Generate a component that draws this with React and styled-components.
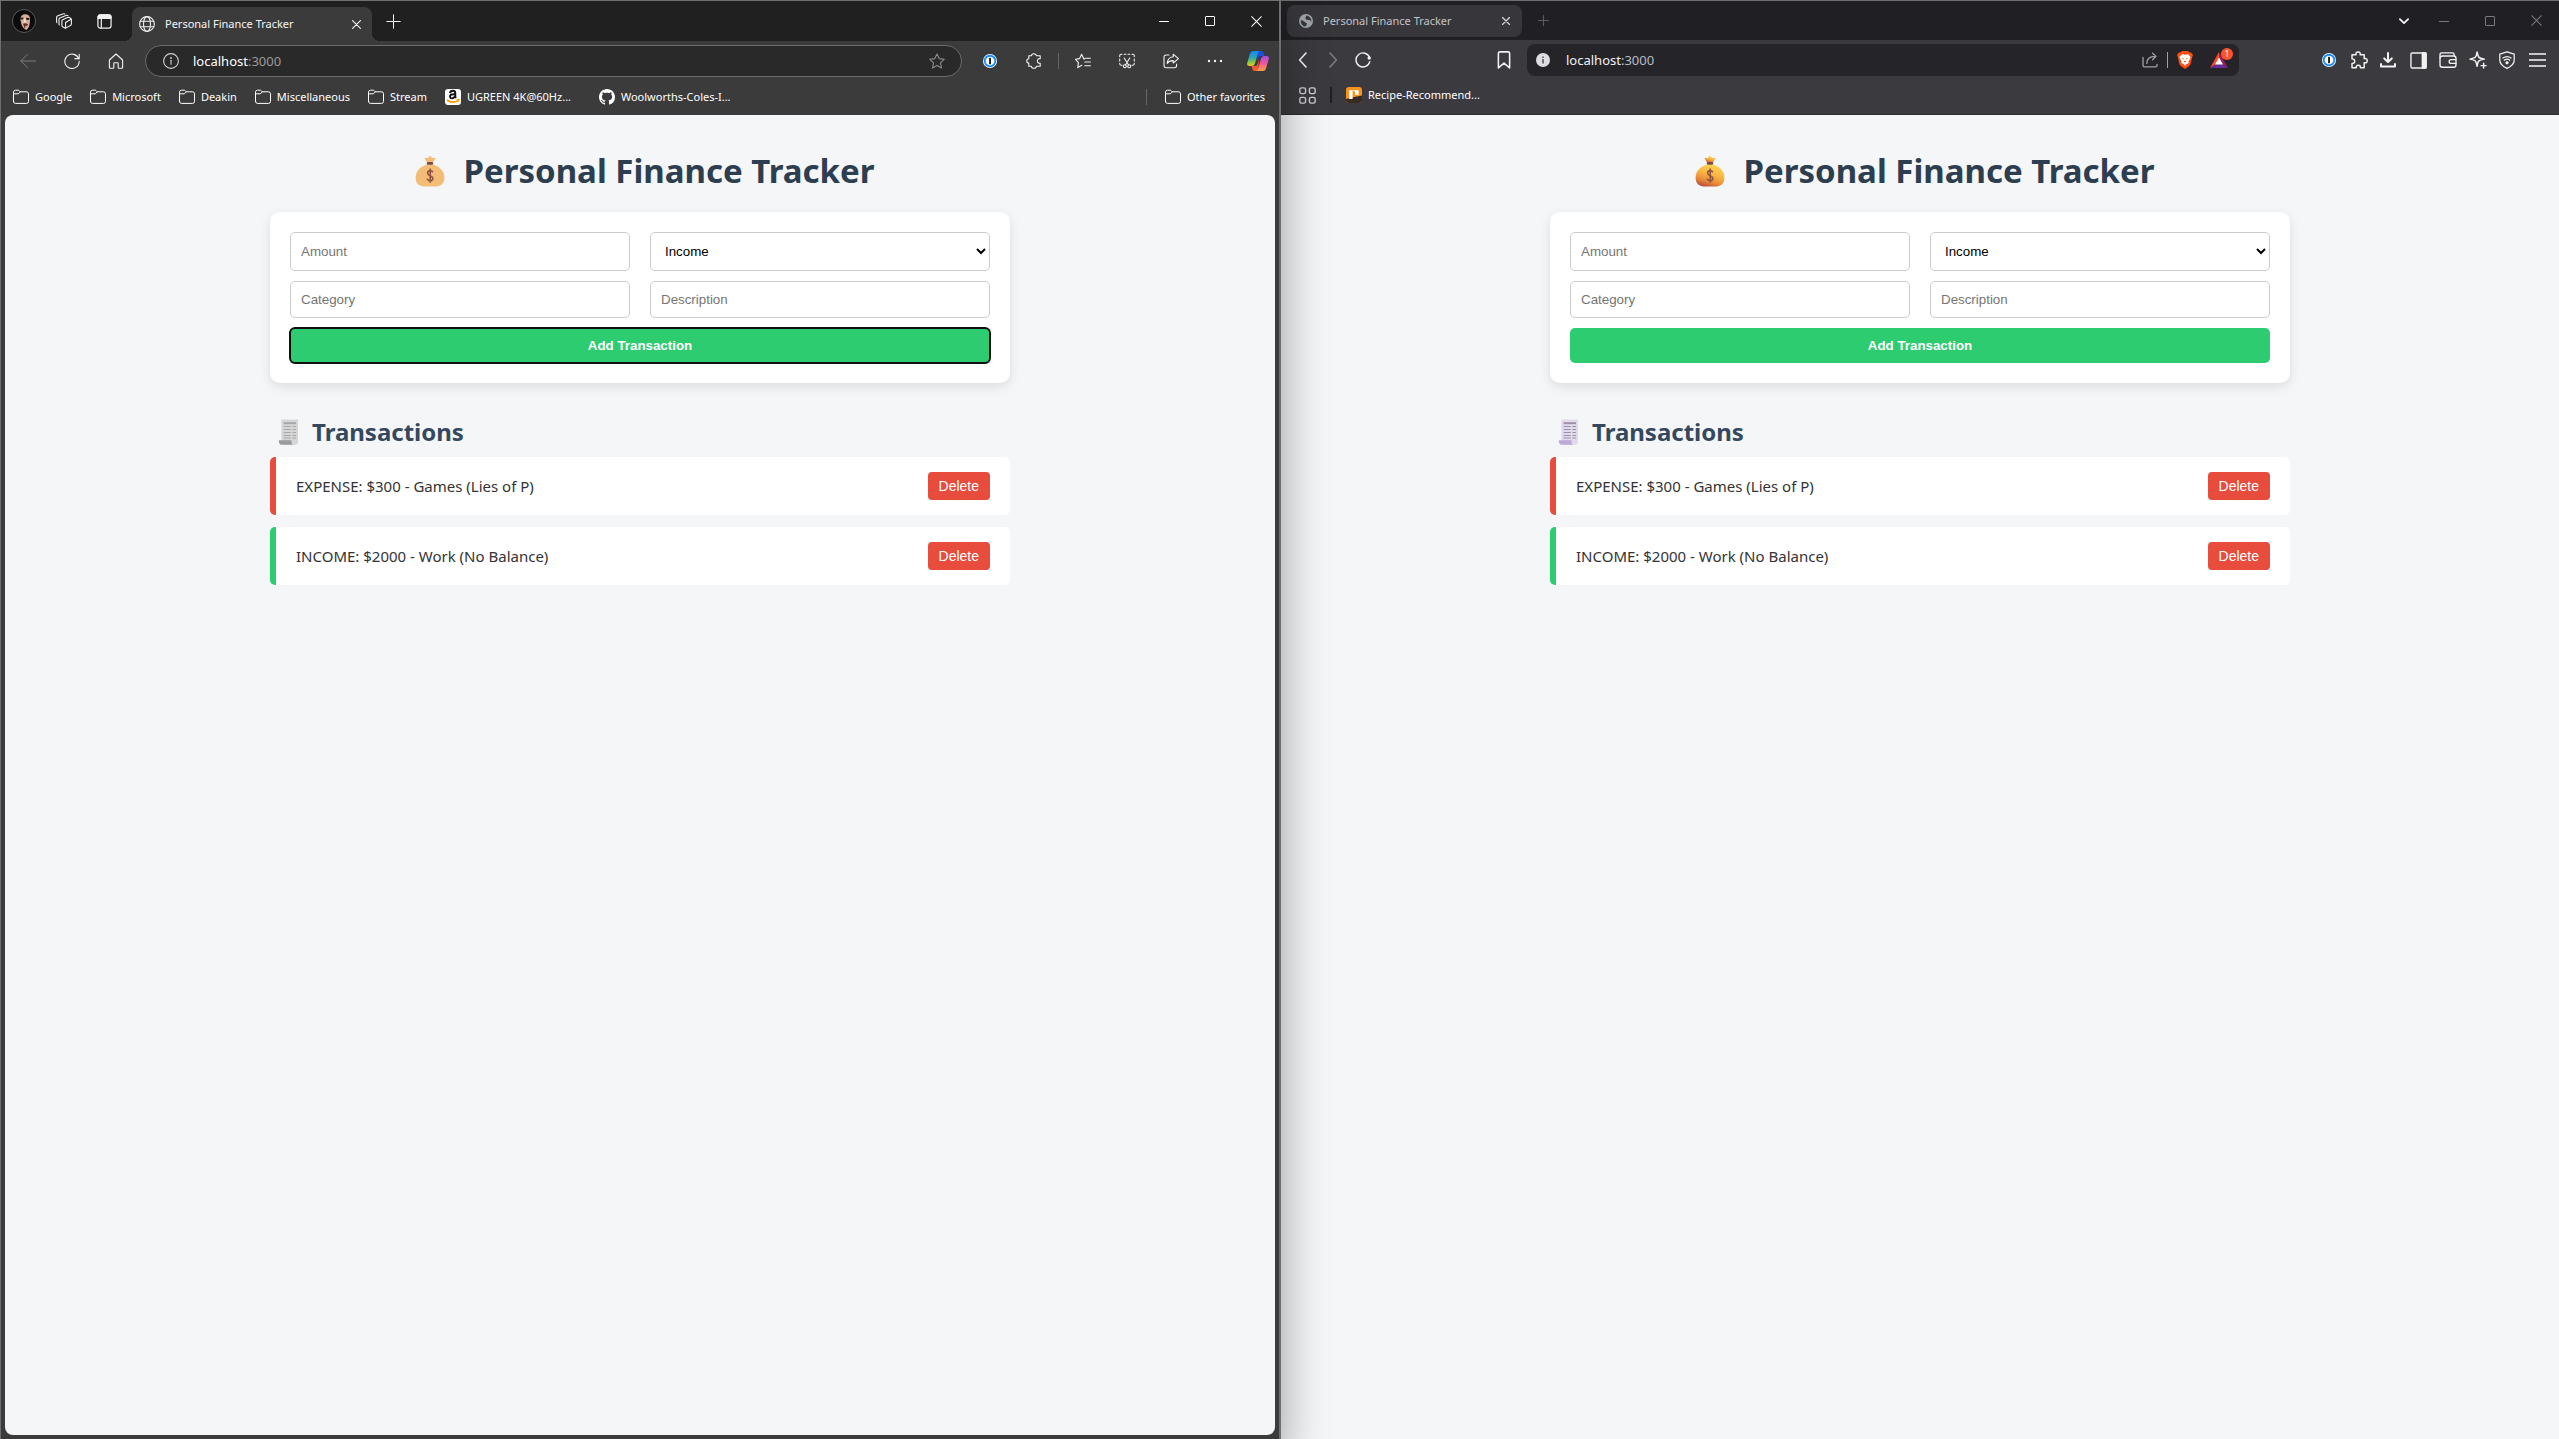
import React from "react";
import styled, { createGlobalStyle, css } from "styled-components";

const UI_FONT = `"Noto Sans", "Open Sans", sans-serif`;
const CONTROL_FONT = `"Liberation Sans", Arial, sans-serif`;

const GlobalStyle = createGlobalStyle`
  *, *::before, *::after { box-sizing: border-box; }
  body { margin: 0; background: #f4f6f8; font-family: ${UI_FONT}; }
  button { font-family: inherit; }
`;

/* ---------- desktop ---------- */

const Desktop = styled.div`
  display: grid;
  grid-template-columns: minmax(0, 1281fr) minmax(0, 1278fr);
  min-height: 100vh;
  overflow: hidden;
`;

const EdgeWindow = styled.section`
  position: relative;
  z-index: 1;
  display: flex;
  flex-direction: column;
  background: #3b3b3b;
  border: solid #6f6f6f;
  border-width: 1px 2px 0 1px;
  box-shadow: 0 24px 44px rgba(0, 0, 0, 0.38);
`;

const BraveWindow = styled.section`
  display: flex;
  flex-direction: column;
  background: #3b3b3f;
  border-top: 1px solid #6f6f6f;
`;

/* ---------- shared chrome parts ---------- */

const IconButton = styled.button`
  display: flex;
  align-items: center;
  justify-content: center;
  flex: ${(p) => (p.$grow ? "1 1 0" : "none")};
  width: ${(p) => p.$w || 44}px;
  min-width: 0;
  height: 32px;
  padding: 0;
  border: 0;
  background: none;
  color: ${(p) => p.$color || "#f2f2f2"};
`;

const Divider = styled.span`
  flex: none;
  width: ${(p) => p.$w || 1}px;
  height: 16px;
  margin: 0 ${(p) => p.$gap}px;
  background: ${(p) => p.$color};
`;

const TabTitle = styled.span`
  flex: 1;
  font-size: 11px;
  line-height: 16px;
  white-space: nowrap;
  color: ${(p) => p.$color};
`;

const Spacer = styled.span`
  flex: 1;
`;

const AddressBox = styled.div`
  display: flex;
  align-items: center;
  flex: 1;
  min-width: 0;
  height: 32px;
`;

const Url = styled.a`
  flex: 1;
  font-size: 13px;
  line-height: 20px;
  color: ${(p) => p.$color};
  text-decoration: none;
`;

const Port = styled.span`
  color: ${(p) => p.$color};
`;

const Bookmark = styled.a`
  display: flex;
  align-items: center;
  gap: 6px;
  flex: none;
  min-width: ${(p) => p.$min || 0}px;
  color: #fff;
  font-size: 11px;
  line-height: 16px;
  white-space: nowrap;
  text-decoration: none;
`;

/* ---------- Edge ---------- */

const EdgeTitleBar = styled.header`
  display: flex;
  align-items: center;
  height: 40px;
  padding-left: 3px;
  background: #202020;
`;

const EdgeTab = styled.div`
  position: relative;
  display: flex;
  align-items: center;
  align-self: flex-end;
  gap: 10px;
  width: 240px;
  height: 34px;
  margin: 0 7px 0 8px;
  padding-left: 7px;
  border-radius: 8px 8px 0 0;
  background: #3b3b3b;
  color: #f0f0f0;
  &::before,
  &::after {
    content: "";
    position: absolute;
    bottom: 0;
    width: 8px;
    height: 8px;
  }
  &::before {
    right: 100%;
    background: radial-gradient(circle at 0 0, #202020 8px, #3b3b3b 8px);
  }
  &::after {
    left: 100%;
    background: radial-gradient(circle at 100% 0, #202020 8px, #3b3b3b 8px);
  }
`;

const EdgeToolbar = styled.nav`
  display: flex;
  align-items: center;
  height: 40px;
  padding-left: 5px;
`;

const EdgeAddress = styled(AddressBox)`
  gap: 14px;
  margin: 0 6px 0 7px;
  padding: 0 16px;
  border: 1px solid #6b6b6b;
  border-radius: 16px;
  background: #292929;
`;

const EdgeBookmarks = styled.nav`
  display: flex;
  align-items: center;
  gap: 18px;
  height: 34px;
  padding: 0 14px 2px 12px;
`;

const EdgeViewport = styled.main`
  flex: 1;
  margin: 0 4px 4px;
  border-radius: 8px;
  background: #f4f6f8;
`;

/* ---------- Brave ---------- */

const BraveTitleBar = styled.header`
  display: flex;
  align-items: center;
  height: 39px;
  padding-left: 6px;
  background: #202024;
`;

const BraveTab = styled.div`
  display: flex;
  align-items: center;
  gap: 10px;
  width: 235px;
  height: 32px;
  padding-left: 12px;
  border-radius: 8px;
  background: #36363b;
`;

const BraveToolbar = styled.nav`
  display: flex;
  align-items: center;
  height: 40px;
  padding: 0 7px;
`;

const BraveAddress = styled(AddressBox)`
  gap: 16px;
  margin: 0 75px 0 7px;
  padding: 0 2px 0 9px;
  border-radius: 8px;
  background: #252529;
`;

const AddressActions = styled.div`
  display: flex;
  align-items: center;
`;

const BookmarkToggle = styled(IconButton)`
  margin-left: 110px;
`;

const BraveActions = styled.div`
  display: flex;
  width: 238px;
`;

const BraveBookmarks = styled.nav`
  display: flex;
  align-items: center;
  height: 35px;
  padding: 0 18px 4px;
  border-bottom: 1px solid #2c2c2f;
`;

const BraveViewport = styled.main`
  flex: 1;
  background: #f4f6f8;
`;

const RewardsButton = styled(IconButton)`
  position: relative;
`;

const Badge = styled.span`
  position: absolute;
  top: 4px;
  right: 4px;
  width: 12px;
  height: 12px;
  border-radius: 6px;
  background: #fb542b;
  color: #fff;
  font-size: 8px;
  line-height: 12px;
  text-align: center;
`;

/* ---------- finance page ---------- */

const Page = styled.div`
  width: 740px;
  max-width: 100%;
  margin: 0 auto;
  padding: 32px 0;
`;

const Title = styled.h1`
  display: flex;
  align-items: center;
  justify-content: center;
  gap: 10px;
  margin: 0 0 17px;
  color: #2c3e50;
  font-size: 33px;
  line-height: 48px;
  font-weight: 700;
`;

const Form = styled.form`
  display: grid;
  grid-template-columns: 1fr 1fr;
  gap: 10px 20px;
  padding: 20px;
  border-radius: 10px;
  background: #fff;
  box-shadow: 0 4px 12px rgba(0, 0, 0, 0.1);
`;

const field = css`
  width: 100%;
  padding: 10px;
  border: 1px solid #ccc;
  border-radius: 5px;
  background: #fff;
  font-family: ${CONTROL_FONT};
`;

const Input = styled.input`
  ${field}
  &::placeholder { color: #757575; }
`;

const Select = styled.select`
  ${field}
  height: 39px;
  color: #000;
`;

const SubmitButton = styled.button`
  grid-column: 1 / -1;
  padding: 10px;
  border: 0;
  border-radius: 5px;
  background: #2ecc71;
  color: #fff;
  font-family: ${CONTROL_FONT};
  font-weight: 700;
  outline: ${(p) => (p.$focused ? "2px solid #101010" : "none")};
  outline-offset: -1px;
`;

const SectionTitle = styled.h2`
  display: flex;
  align-items: center;
  gap: 6px;
  margin: 31px 0 7px;
  color: #34495e;
  font-size: 24px;
  line-height: 36px;
  font-weight: 700;
`;

const List = styled.ul`
  display: flex;
  flex-direction: column;
  gap: 12px;
  margin: 0;
  padding: 0;
  list-style: none;
`;

const Item = styled.li`
  display: flex;
  align-items: center;
  justify-content: space-between;
  padding: 15px 20px;
  border-left: 6px solid ${(p) => (p.$type === "INCOME" ? "#2ecc71" : "#e74c3c")};
  border-radius: 5px;
  background: #fff;
  color: #333;
  font-size: 15px;
  line-height: 28px;
`;

const DeleteButton = styled.button`
  height: 28px;
  padding: 0 11px;
  border: 0;
  border-radius: 4px;
  background: #e74c3c;
  color: #fff;
  font-family: ${CONTROL_FONT};
  font-size: 14px;
`;

/* ---------- drawings ---------- */

const Glyph = ({ size = 16, sw = 1, children }) => (
  <svg width={size} height={size} viewBox="0 0 16 16" fill="none" stroke="currentColor"
    strokeWidth={sw} strokeLinecap="round" strokeLinejoin="round" aria-hidden="true">
    {children}
  </svg>
);

const Folder = () => (
  <Glyph sw={1}>
    <path d="M.5 12.4V3.2Q.5 1.2 2.5 1.2H5Q5.8 1.2 6.3 1.8L7.3 2.8H13.5Q15.5 2.8 15.5 4.8V12.4Q15.5 14.4 13.5 14.4H2.5Q.5 14.4.5 12.4Z" />
    <path d="M.8 4.8H5Q5.8 4.8 6.3 4L7.3 2.8" />
  </Glyph>
);
const Globe = () => (
  <Glyph sw={1.1}><circle cx="8" cy="8" r="7.4" /><ellipse cx="8" cy="8" rx="3.5" ry="7.4" /><path d="M1.3 5.3H14.7M1.3 10.7H14.7" /></Glyph>
);
const Workspaces = () => (
  <Glyph size={16} sw={1.1}>
    <path d="M6.6 6.8 11.6 4.5Q12.6 4.1 13.4 4.6L14.8 5.4Q15.4 5.8 15.4 6.6V11Q15.4 11.8 14.7 12.2L10.2 14.9Q9.6 15.3 8.9 14.9L6.6 13.7Q5.9 13.3 5.9 12.5V8Q5.9 7.2 6.6 6.8Z" />
    <path d="M9.6 9.4V14.9M9.6 9.4 15 6.3" />
    <path d="M3.3 12Q3 11.7 3 11V6.4Q3 5.4 3.8 5L10 2.4Q11 2.1 12 2.7" />
    <path d="M.9 9.6Q.6 9.3.6 8.6V4.4Q.6 3.5 1.4 3.1L6.8.9Q7.8.5 8.8 1" />
  </Glyph>
);
const TabActions = () => (
  <Glyph size={15} sw={1.3}>
    <rect x="1" y="1" width="14" height="14" rx="2.4" />
    <path d="M1.2 2.6Q1.6 1 3.4 1H12.6Q14.4 1 14.8 2.6V4.6H1.2Z" fill="currentColor" />
    <path d="M4.6 5V14.8" />
  </Glyph>
);
const Cross = ({ size = 10, sw = 1.6 }) => (
  <Glyph size={size} sw={sw}><path d="M1 1 15 15M15 1 1 15" /></Glyph>
);
const Plus = ({ size = 15, sw = 1.1 }) => (
  <Glyph size={size} sw={sw}><path d="M8 .8V15.2M.8 8H15.2" /></Glyph>
);
const Minimise = () => (
  <svg width="10" height="10" viewBox="0 0 10 10" aria-hidden="true"><path d="M0 5H10V6H0Z" fill="currentColor" /></svg>
);
const Maximise = () => (
  <svg width="10" height="10" viewBox="0 0 10 10" aria-hidden="true"><rect x=".5" y=".5" width="9" height="9" rx=".5" fill="none" stroke="currentColor" /></svg>
);
const BackArrow = () => (
  <Glyph size={16}><path d="M15.5 8H.8M7.6 1.2.8 8 7.6 14.8" /></Glyph>
);
const Reload = () => (
  <Glyph size={16} sw={1.1}><path d="M14.9 6.2A7.2 7.2 0 1 0 15.2 8.4M15.2 1.2V5.6H10.8" /></Glyph>
);
const Home = () => (
  <Glyph size={16} sw={1.1}><path d="M1.4 7 8 1 14.6 7V14.4Q14.6 15.2 13.8 15.2H11Q10.2 15.2 10.2 14.4V10.6Q10.2 9.8 9.4 9.8H6.6Q5.8 9.8 5.8 10.6V14.4Q5.8 15.2 5 15.2H2.2Q1.4 15.2 1.4 14.4Z" /></Glyph>
);
const InfoOutline = () => (
  <Glyph sw={1.1}><circle cx="8" cy="8" r="7.4" /><path d="M8 7.3V11.3" /><circle cx="8" cy="4.9" r=".4" fill="currentColor" /></Glyph>
);
const STAR = "M8 .9 10.2 5.6 15.3 6.2 11.5 9.8 12.5 15 8 12.4 3.5 15 4.5 9.8.7 6.2 5.8 5.6Z";
const Star = () => <Glyph sw={1.1}><path d={STAR} /></Glyph>;
const OnePassword = () => (
  <svg width="14" height="14" viewBox="0 0 16 16" aria-hidden="true">
    <circle cx="8" cy="8" r="8" fill="#fff" /><circle cx="8" cy="8" r="7.1" fill="#1a8cff" />
    <circle cx="8" cy="8" r="5" fill="#fff" /><rect x="7" y="4.4" width="2.1" height="7.2" rx=".6" fill="#111" />
  </svg>
);
const EdgePuzzle = () => (
  <Glyph sw={1.1}><path d="M5.4 2.8Q5.6.7 7.9.7T10.4 2.8H14.2V5.6Q11.4 5.4 11.4 7.9T14.2 10.2V13.2H10.4Q10.2 15.3 7.9 15.3T5.4 13.2H2.8V10Q.8 10 .8 7.9T2.8 5.8V2.8Z" /></Glyph>
);
const Favorites = () => (
  <Glyph sw={1.1}><path d="M9.4 6H8.8L6.6 1.3 4.6 5.6.6 6.3 3.4 9.6 2.8 14.6 6.8 12.3M9.8 5.2H15.4M9.8 9H15.4M9.8 12.8H15.4" /></Glyph>
);
const Capture = () => (
  <Glyph size={16} sw={1.1}>
    <path d="M.7 3.6V2.8Q.7 1.2 2.3 1.2H3M5.2 1.2H7M9 1.2H10.8M13 1.2H13.7Q15.3 1.2 15.3 2.8V3.6M.7 6V8M15.3 6V8M.7 10.4Q.7 12.2 2.4 12.2H3M15.3 10.4Q15.3 12.2 13.6 12.2H13M5.2 5 9.6 12M10.8 5 6.4 12" />
    <circle cx="5.8" cy="13.3" r="1.5" /><circle cx="10.2" cy="13.3" r="1.5" />
  </Glyph>
);
const EdgeShare = () => (
  <Glyph sw={1.1}><path d="M6 2H3.2Q1 2 1 4.2V12.6Q1 14.8 3.2 14.8H11.4Q13.6 14.8 13.6 12.6V11M10.2 1.2 15.4 5.6 10.2 10V7.6Q6 7.4 4.2 10.6 4.6 4.4 10.2 3.8Z" /></Glyph>
);
const Dots = () => (
  <Glyph><g fill="currentColor" stroke="none"><circle cx="2" cy="8" r="1.2" /><circle cx="8" cy="8" r="1.2" /><circle cx="14" cy="8" r="1.2" /></g></Glyph>
);
const Copilot = () => (
  <svg width="22" height="20" viewBox="0 0 22 20" aria-hidden="true">
    <defs>
      <linearGradient id="cpBlue" x1="0" y1="0" x2="0" y2="1"><stop offset="0" stopColor="#1687ef" /><stop offset=".45" stopColor="#2aa6b8" /><stop offset=".75" stopColor="#8fc63f" /><stop offset="1" stopColor="#f3c51c" /></linearGradient>
      <linearGradient id="cpPink" x1="0" y1="0" x2="0" y2="1"><stop offset="0" stopColor="#a64de8" /><stop offset=".5" stopColor="#f0569a" /><stop offset="1" stopColor="#ffa13d" /></linearGradient>
    </defs>
    <path d="M11 0H14.4Q16 0 16.6 1.8L17.6 5H13.6Q12 5 11.4 7L10 12Z" fill="#1d4fd6" />
    <path d="M11.2 20H7.4Q5.8 20 5.4 18.2L4.6 15H8.6Q10 15 10.6 13L12 8Z" fill="#f45a2c" />
    <path d="M6 0H13Q11.4.4 10.8 2.6L8 12.4Q7.2 15 4.8 15H2.4Q-.6 15 .3 11.8L3 2.6Q3.8 0 6 0Z" fill="url(#cpBlue)" />
    <path d="M16 20H9Q10.6 19.6 11.2 17.4L14 7.6Q14.8 5 17.2 5H19.6Q22.6 5 21.7 8.2L19 17.4Q18.2 20 16 20Z" fill="url(#cpPink)" />
  </svg>
);
const Avatar = () => (
  <svg width="24" height="24" viewBox="0 0 24 24" aria-hidden="true">
    <circle cx="12" cy="12" r="11.5" fill="#0b0b0d" stroke="#5a5a5a" />
    <path d="M8.4 7Q9 4.2 13.4 4.4 18.6 5 18 11 18 17.6 14.6 21 11 20 9.4 15 8 11 8.4 7Z" fill="#d8ad98" />
    <path d="M8 9.6Q9.4 8 11.6 8.8L11 10.4Q9.4 10.8 8.2 10.2ZM14 9Q16.2 8.4 17.8 9.8L16.8 11H14.4Z" fill="#2a1a18" />
    <path d="M11 14.8Q13.4 13.6 15.8 15.2L15.4 17 13.6 16.4 13 20Z" fill="#5a2e2a" />
    <path d="M12 9.6 13.6 9.8 14 13.4 11.6 13.4Z" fill="#f6dccb" />
    <path d="M7.4 8.4Q8 2.8 14 3 18.6 3.4 18.4 8.6 16.6 5 13 5.2 9.6 5.2 8.2 9.6Z" fill="#120d0d" />
  </svg>
);
const Amazon = () => (
  <svg width="16" height="16" viewBox="0 0 16 16" aria-hidden="true">
    <rect width="16" height="16" rx="3" fill="#fff" />
    <path d="M5 4.2Q5.4 1.8 7.8 1.8T10.3 4.2V7.8L11 8.9M9.9 5.2Q5 5 5 7.6 5.2 9.4 6.8 9.4 8.8 9.3 9.9 7.4" fill="none" stroke="#111" strokeWidth="1.9" />
    <path d="M2 11Q7.4 15 13 11.6" fill="none" stroke="#f90" strokeWidth="1.6" />
    <path d="M11.4 10.6 14.4 10.4 13.4 13.2" fill="none" stroke="#f90" />
  </svg>
);
const GitHub = () => (
  <svg width="16" height="16" viewBox="0 0 16 16" fill="#fff" aria-hidden="true">
    <path d="M8 0C3.58 0 0 3.58 0 8c0 3.54 2.29 6.53 5.47 7.59.4.07.55-.17.55-.38 0-.19-.01-.82-.01-1.49-2.01.37-2.53-.49-2.69-.94-.09-.23-.48-.94-.82-1.13-.28-.15-.68-.52-.01-.53.63-.01 1.08.58 1.23.82.72 1.21 1.87.87 2.33.66.07-.52.28-.87.51-1.07-1.78-.2-3.64-.89-3.64-3.95 0-.87.31-1.59.82-2.15-.08-.2-.36-1.02.08-2.12 0 0 .67-.21 2.2.82.64-.18 1.32-.27 2-.27s1.36.09 2 .27c1.53-1.04 2.2-.82 2.2-.82.44 1.1.16 1.92.08 2.12.51.56.82 1.27.82 2.15 0 3.07-1.87 3.75-3.65 3.95.29.25.54.73.54 1.48 0 1.07-.01 1.93-.01 2.2 0 .21.15.46.55.38A8.01 8.01 0 0 0 16 8c0-4.42-3.58-8-8-8Z" />
  </svg>
);

const BraveGlobe = () => (
  <svg width="14" height="14" viewBox="0 0 14 14" aria-hidden="true">
    <circle cx="7" cy="7" r="7" fill="#9da1a8" />
    <path d="M1.6 6.4Q3.6 6.2 5 7.4T8 9.4Q8 11 6.4 12.4 2 12 1.6 6.4ZM8 1.6Q6 3 6.4 4.6T9.6 6Q11.6 5.6 12.4 8 12.6 3.4 8 1.6Z" fill="#36363b" />
  </svg>
);
const Chevron = ({ d, size = 16, sw = 1.6 }) => <Glyph size={size} sw={sw}><path d={d} /></Glyph>;
const BraveReload = () => (
  <Glyph size={16} sw={1.4}><path d="M14.6 5.6A7 7 0 1 0 14.8 9.6" /><circle cx="14.2" cy="6" r="1.7" fill="currentColor" stroke="none" /></Glyph>
);
const Ribbon = () => (
  <Glyph size={18} sw={1.4}><path d="M3 2.2Q3 .8 4.4.8H11.6Q13 .8 13 2.2V15L8 10.8 3 15Z" /></Glyph>
);
const InfoSolid = () => (
  <svg width="14" height="14" viewBox="0 0 14 14" aria-hidden="true"><circle cx="7" cy="7" r="7" fill="#dedee2" /><path d="M6.2 6H7.8V10.6H6.2ZM6.2 3.4H7.8V5H6.2Z" fill="#55555c" /></svg>
);
const BraveShare = () => (
  <Glyph sw={1.3}><path d="M1 5.4V13.4Q1 14.8 2.4 14.8H13.6Q15 14.8 15 13.4V12.4M4.8 11.4Q4.8 4.6 13 4.4M10.6 1.2 14 4.4 10.6 7.8" /></Glyph>
);
const BraveLion = () => (
  <svg width="16" height="18" viewBox="0 0 16 18" aria-hidden="true">
    <path d="M5 0H11L12.6 1.6 14.2 1.4 16 4 15.2 6 13.6 13Q13 15 8 18 3 15 2.4 13L.8 6 0 4 1.8 1.4 3.4 1.6Z" fill="#fb4f14" />
    <path d="M5 3.2 8 3.8 11 3.2 13.6 6 12.6 8.4 11.4 10.6 11.8 12 8.8 13.4 8 15 7.2 13.4 4.2 12 4.6 10.6 3.4 8.4 2.4 6Z" fill="#fff" />
    <path d="M4.6 6.6 7 7.4 6.4 8.4ZM11.4 6.6 9 7.4 9.6 8.4ZM6.4 10.6 8 11.6 9.6 10.6 8 9.8Z" fill="#fb4f14" />
  </svg>
);
const RewardsTriangle = () => (
  <svg width="18" height="16" viewBox="0 0 18 16" aria-hidden="true">
    <path d="M9 0 0 16 9 10Z" fill="#ff4724" /><path d="M0 16H18L9 10Z" fill="#662d91" /><path d="M9 0 18 16 9 10Z" fill="#9e1f63" /><path d="M9 5.4 13 12.4H5Z" fill="#fff" />
  </svg>
);
const BravePuzzle = () => (
  <Glyph size={18} sw={1.3}><path d="M1.8 3.4H5.4Q4.8.8 7.2.8T9 3.4H12.6V6.8Q15.3 6.2 15.3 8.6T12.6 10.4V14.8H9.2Q9.4 12.6 7.4 12.6T5.6 14.8H1.8V11Q4.2 11 4.2 9T1.8 7Z" /></Glyph>
);
const Download = () => (
  <Glyph size={16} sw={2}><path d="M8 1V9.4M4.2 6.4 8 10 11.8 6.4M1 12V14.6H15V12" /></Glyph>
);
const SidePanel = () => (
  <Glyph size={17} sw={1.3}><rect x=".9" y=".9" width="14.2" height="14.2" rx="1.2" /><path d="M11.6.9H15.1V15.1H11.6Z" fill="currentColor" /></Glyph>
);
const Wallet = () => (
  <Glyph size={18} sw={1.2}><rect x=".9" y="4.4" width="14.2" height="10" rx="2" /><path d="M.9 6V3.2Q.9 1.6 2.6 1.6H12.2Q13.4 1.6 13.4 3V4.2M15 7.6H10.8Q9 7.6 9 9.3T10.8 11H15" /></Glyph>
);
const Sparkle = () => (
  <Glyph size={18} sw={1.3}><path d="M7.2.8Q8 4.6 8.8 5.6T13.6 7.2Q9.8 8 8.8 8.8T7.2 13.6Q6.4 9.8 5.6 8.8T.8 7.2Q4.6 6.4 5.6 5.6T7.2.8ZM13 10.8V15.2M10.8 13H15.2" /></Glyph>
);
const ShieldVpn = () => (
  <Glyph size={18} sw={1.1}><path d="M8 .7 14.4 2.8V8Q14.4 12.6 8 15.4 1.6 12.6 1.6 8V2.8ZM4.4 6.2Q8 3.6 11.6 6.2M5.6 8.2Q8 6.4 10.4 8.2" /><path d="M8 9.4 9 10.4 8 11.4 7 10.4Z" fill="currentColor" /></Glyph>
);
const Menu = () => (
  <svg width="17" height="14" viewBox="0 0 17 14" fill="currentColor" aria-hidden="true"><path d="M0 0H17V2H0ZM0 6H17V8H0ZM0 12H17V14H0Z" /></svg>
);
const AppsGrid = () => (
  <Glyph size={17} sw={1.3}><rect x=".8" y=".8" width="5.4" height="5.4" rx="1.6" /><rect x="9.8" y=".8" width="5.4" height="5.4" rx="1.6" /><rect x=".8" y="9.8" width="5.4" height="5.4" rx="1.6" /><rect x="9.8" y="9.8" width="5.4" height="5.4" rx="1.6" /></Glyph>
);
const RecipeIcon = () => (
  <svg width="16" height="16" viewBox="0 0 16 16" aria-hidden="true">
    <rect width="16" height="16" rx="3" fill="#f7941d" /><path d="M0 12 6 10.6 16 8.4V13Q16 16 13 16H3Q0 16 0 13Z" fill="#3a2a24" />
    <rect x="3.2" y="3.2" width="3.4" height="8.8" fill="#fff" /><rect x="9" y="3.2" width="3.6" height="4.6" fill="#fff" /><path d="M6.6 3.2H9V4.2H6.6Z" fill="#fff" />
  </svg>
);

const MoneyBag = ({ glossy }) => (
  <svg width="48" height="32" viewBox="0 0 48 32" aria-hidden="true">
    <defs>
      <linearGradient id="bagGloss" x1=".7" y1="0" x2=".3" y2="1">
        <stop offset="0" stopColor="#ffd650" /><stop offset=".45" stopColor="#f9b443" /><stop offset=".75" stopColor="#e98a38" /><stop offset="1" stopColor="#b94f3a" />
      </linearGradient>
    </defs>
    <g fill={glossy ? "url(#bagGloss)" : "#f3bd78"}>
      <path d="M21 7.4 18.6 3.4Q18.6 2.4 20 2.8L22 3.2Q22.8 1 24 1T26 3.2L28 2.8Q29.4 2.4 29.4 3.4L27 7.4Z" />
      <path d="M21 9.6H27C34 11.6 38.4 16.6 38.4 22.6 38.4 28.6 34.8 31.4 30.4 31.4H17.6C13.2 31.4 9.6 28.6 9.6 22.6 9.6 16.6 14 11.6 21 9.6Z" />
    </g>
    <rect x="20.8" y="7" width="6.4" height="2.8" rx="1.2" fill="#7d4b3d" />
    <path d="M26.8 17.4Q26 15.4 23.8 15.6 21.4 16 21.6 18.2 22 20.4 24.2 21 26.8 21.8 26.8 23.6 26.6 25.6 24.2 25.8 21.8 25.8 21.2 23.6M24.2 13.6V27.8" fill="none" stroke="#915442" strokeWidth="1.6" />
  </svg>
);
const Receipt = ({ tinted }) => {
  const c = tinted ? ["#e0daec", "#bda8d8", "#9b92a6"] : ["#d6d6d6", "#9b9b9b", "#a8a8a8"];
  return (
    <svg width="36" height="28" viewBox="0 0 36 28" aria-hidden="true">
      <path d="M11.4 1 13 2 14.4 1 16 2 17.4 1 19 2 20.4 1 22 2 23.4 1 25 2 26.4 1 28 2V24Q28 26.8 25.4 26.8H14L11.4 22Z" fill={c[0]} />
      <path d="M8.8 22.2H21.6Q21 26.8 23.8 26.8H11.4Q8.8 26.4 8.8 22.2Z" fill={c[1]} />
      <path d="M13.6 5.2H26" stroke={c[2]} strokeWidth="2" />
      <path d="M13.6 8.5H20.8M22.4 8.5H26M13.6 11.5H20.8M22.4 11.5H26M13.6 14.5H20.8M22.4 14.5H26M13.6 17.5H20.8M22.4 17.5H26M13.6 20H20.8M22.4 20H26" stroke={c[2]} strokeWidth="1" />
    </svg>
  );
};

/* ---------- composition ---------- */

const transactions = [
  { type: "EXPENSE", text: "EXPENSE: $300 - Games (Lies of P)" },
  { type: "INCOME", text: "INCOME: $2000 - Work (No Balance)" },
];

function FinanceTracker({ color, submitFocused }) {
  return (
    <Page>
      <Title><MoneyBag glossy={color} />Personal Finance Tracker</Title>
      <Form onSubmit={(e) => e.preventDefault()}>
        <Input type="number" placeholder="Amount" aria-label="Amount" />
        <Select aria-label="Transaction type" defaultValue="Income">
          <option>Income</option>
          <option>Expense</option>
        </Select>
        <Input type="text" placeholder="Category" aria-label="Category" />
        <Input type="text" placeholder="Description" aria-label="Description" />
        <SubmitButton type="submit" $focused={submitFocused}>Add Transaction</SubmitButton>
      </Form>
      <SectionTitle><Receipt tinted={color} />Transactions</SectionTitle>
      <List>
        {transactions.map((t) => (
          <Item key={t.type} $type={t.type}>
            {t.text}
            <DeleteButton type="button">Delete</DeleteButton>
          </Item>
        ))}
      </List>
    </Page>
  );
}

const WindowControls = ({ color }) => (
  <>
    <IconButton $w={46} $color={color} aria-label="Minimise"><Minimise /></IconButton>
    <IconButton $w={46} $color={color} aria-label="Maximise"><Maximise /></IconButton>
    <IconButton $w={46} $color={color} aria-label="Close window"><Cross size={11} sw={1.5} /></IconButton>
  </>
);

const folders = ["Google", "Microsoft", "Deakin", "Miscellaneous", "Stream"];

function Edge() {
  return (
    <EdgeWindow>
      <EdgeTitleBar>
        <IconButton $w={40} aria-label="Profile"><Avatar /></IconButton>
        <IconButton $w={40} aria-label="Workspaces"><Workspaces /></IconButton>
        <IconButton $w={40} aria-label="Tab actions"><TabActions /></IconButton>
        <EdgeTab>
          <Globe />
          <TabTitle $color="#f5f5f5">Personal Finance Tracker</TabTitle>
          <IconButton $w={32} aria-label="Close tab"><Cross size={9} sw={2} /></IconButton>
        </EdgeTab>
        <IconButton $w={28} aria-label="New tab"><Plus /></IconButton>
        <Spacer />
        <WindowControls color="#fff" />
      </EdgeTitleBar>
      <EdgeToolbar>
        <IconButton $color="#7c7c7c" aria-label="Back"><BackArrow /></IconButton>
        <IconButton aria-label="Refresh"><Reload /></IconButton>
        <IconButton aria-label="Home"><Home /></IconButton>
        <EdgeAddress>
          <IconButton $w={17} $color="#d0d0d0" aria-label="Site information"><InfoOutline /></IconButton>
          <Url href="#" $color="#fff">localhost<Port $color="#9a9a9a">:3000</Port></Url>
          <IconButton $w={16} $color="#8c8c8c" aria-label="Add to favorites"><Star /></IconButton>
        </EdgeAddress>
        <IconButton aria-label="1Password"><OnePassword /></IconButton>
        <IconButton aria-label="Extensions"><EdgePuzzle /></IconButton>
        <Divider $gap={2} $color="#666" />
        <IconButton aria-label="Favorites"><Favorites /></IconButton>
        <IconButton aria-label="Screenshot"><Capture /></IconButton>
        <IconButton aria-label="Share"><EdgeShare /></IconButton>
        <IconButton aria-label="Settings and more"><Dots /></IconButton>
        <IconButton $w={42} aria-label="Copilot"><Copilot /></IconButton>
      </EdgeToolbar>
      <EdgeBookmarks>
        {folders.map((name) => <Bookmark href="#" key={name}><Folder />{name}</Bookmark>)}
        <Bookmark href="#" $min={136}><Amazon />UGREEN 4K@60Hz...</Bookmark>
        <Bookmark href="#"><GitHub />Woolworths-Coles-I...</Bookmark>
        <Spacer />
        <Divider $gap={0} $color="#666" />
        <Bookmark href="#"><Folder />Other favorites</Bookmark>
      </EdgeBookmarks>
      <EdgeViewport><FinanceTracker submitFocused /></EdgeViewport>
    </EdgeWindow>
  );
}

function Brave() {
  return (
    <BraveWindow>
      <BraveTitleBar>
        <BraveTab>
          <BraveGlobe />
          <TabTitle $color="#c4c4c8">Personal Finance Tracker</TabTitle>
          <IconButton $w={32} $color="#d8d8dc" aria-label="Close tab"><Cross size={8} sw={2.6} /></IconButton>
        </BraveTab>
        <IconButton $w={42} $color="#5c5c60" aria-label="New tab"><Plus size={11} sw={1.6} /></IconButton>
        <Spacer />
        <IconButton $w={34} aria-label="Search tabs"><Chevron size={10} sw={3} d="M1.4 5 8 11.4 14.6 5" /></IconButton>
        <WindowControls color="#7a7a7e" />
      </BraveTitleBar>
      <BraveToolbar>
        <IconButton $w={30} aria-label="Back"><Chevron d="M11 1 4.6 8 11 15" /></IconButton>
        <IconButton $w={30} $color="#7c7c80" aria-label="Forward"><Chevron d="M5 1 11.4 8 5 15" /></IconButton>
        <IconButton $w={30} aria-label="Reload"><BraveReload /></IconButton>
        <BookmarkToggle $w={32} aria-label="Bookmark this tab"><Ribbon /></BookmarkToggle>
        <BraveAddress>
          <IconButton $w={14} aria-label="Site information"><InfoSolid /></IconButton>
          <Url href="#" $color="#f0f0f2">localhost<Port $color="#b9bcc4">:3000</Port></Url>
          <AddressActions>
            <IconButton $w={32} $color="#a0a0a6" aria-label="Share"><BraveShare /></IconButton>
            <Divider $gap={1} $color="#a0a0a6" />
            <IconButton $w={32} aria-label="Brave Shields"><BraveLion /></IconButton>
            <RewardsButton $w={36} aria-label="Brave Rewards"><RewardsTriangle /><Badge>1</Badge></RewardsButton>
          </AddressActions>
        </BraveAddress>
        <BraveActions>
          <IconButton $grow aria-label="1Password"><OnePassword /></IconButton>
          <IconButton $grow aria-label="Extensions"><BravePuzzle /></IconButton>
          <IconButton $grow aria-label="Downloads"><Download /></IconButton>
          <IconButton $grow aria-label="Side panel"><SidePanel /></IconButton>
          <IconButton $grow aria-label="Wallet"><Wallet /></IconButton>
          <IconButton $grow aria-label="Leo AI"><Sparkle /></IconButton>
          <IconButton $grow aria-label="VPN"><ShieldVpn /></IconButton>
          <IconButton $grow $color="#c8c8cc" aria-label="Menu"><Menu /></IconButton>
        </BraveActions>
      </BraveToolbar>
      <BraveBookmarks>
        <IconButton $w={17} $color="#d0d0d4" aria-label="Apps"><AppsGrid /></IconButton>
        <Divider $w={2} $gap={14} $color="#202024" />
        <Bookmark href="#"><RecipeIcon />Recipe-Recommend...</Bookmark>
      </BraveBookmarks>
      <BraveViewport><FinanceTracker color /></BraveViewport>
    </BraveWindow>
  );
}

export default function App() {
  return (
    <>
      <GlobalStyle />
      <Desktop>
        <Edge />
        <Brave />
      </Desktop>
    </>
  );
}
